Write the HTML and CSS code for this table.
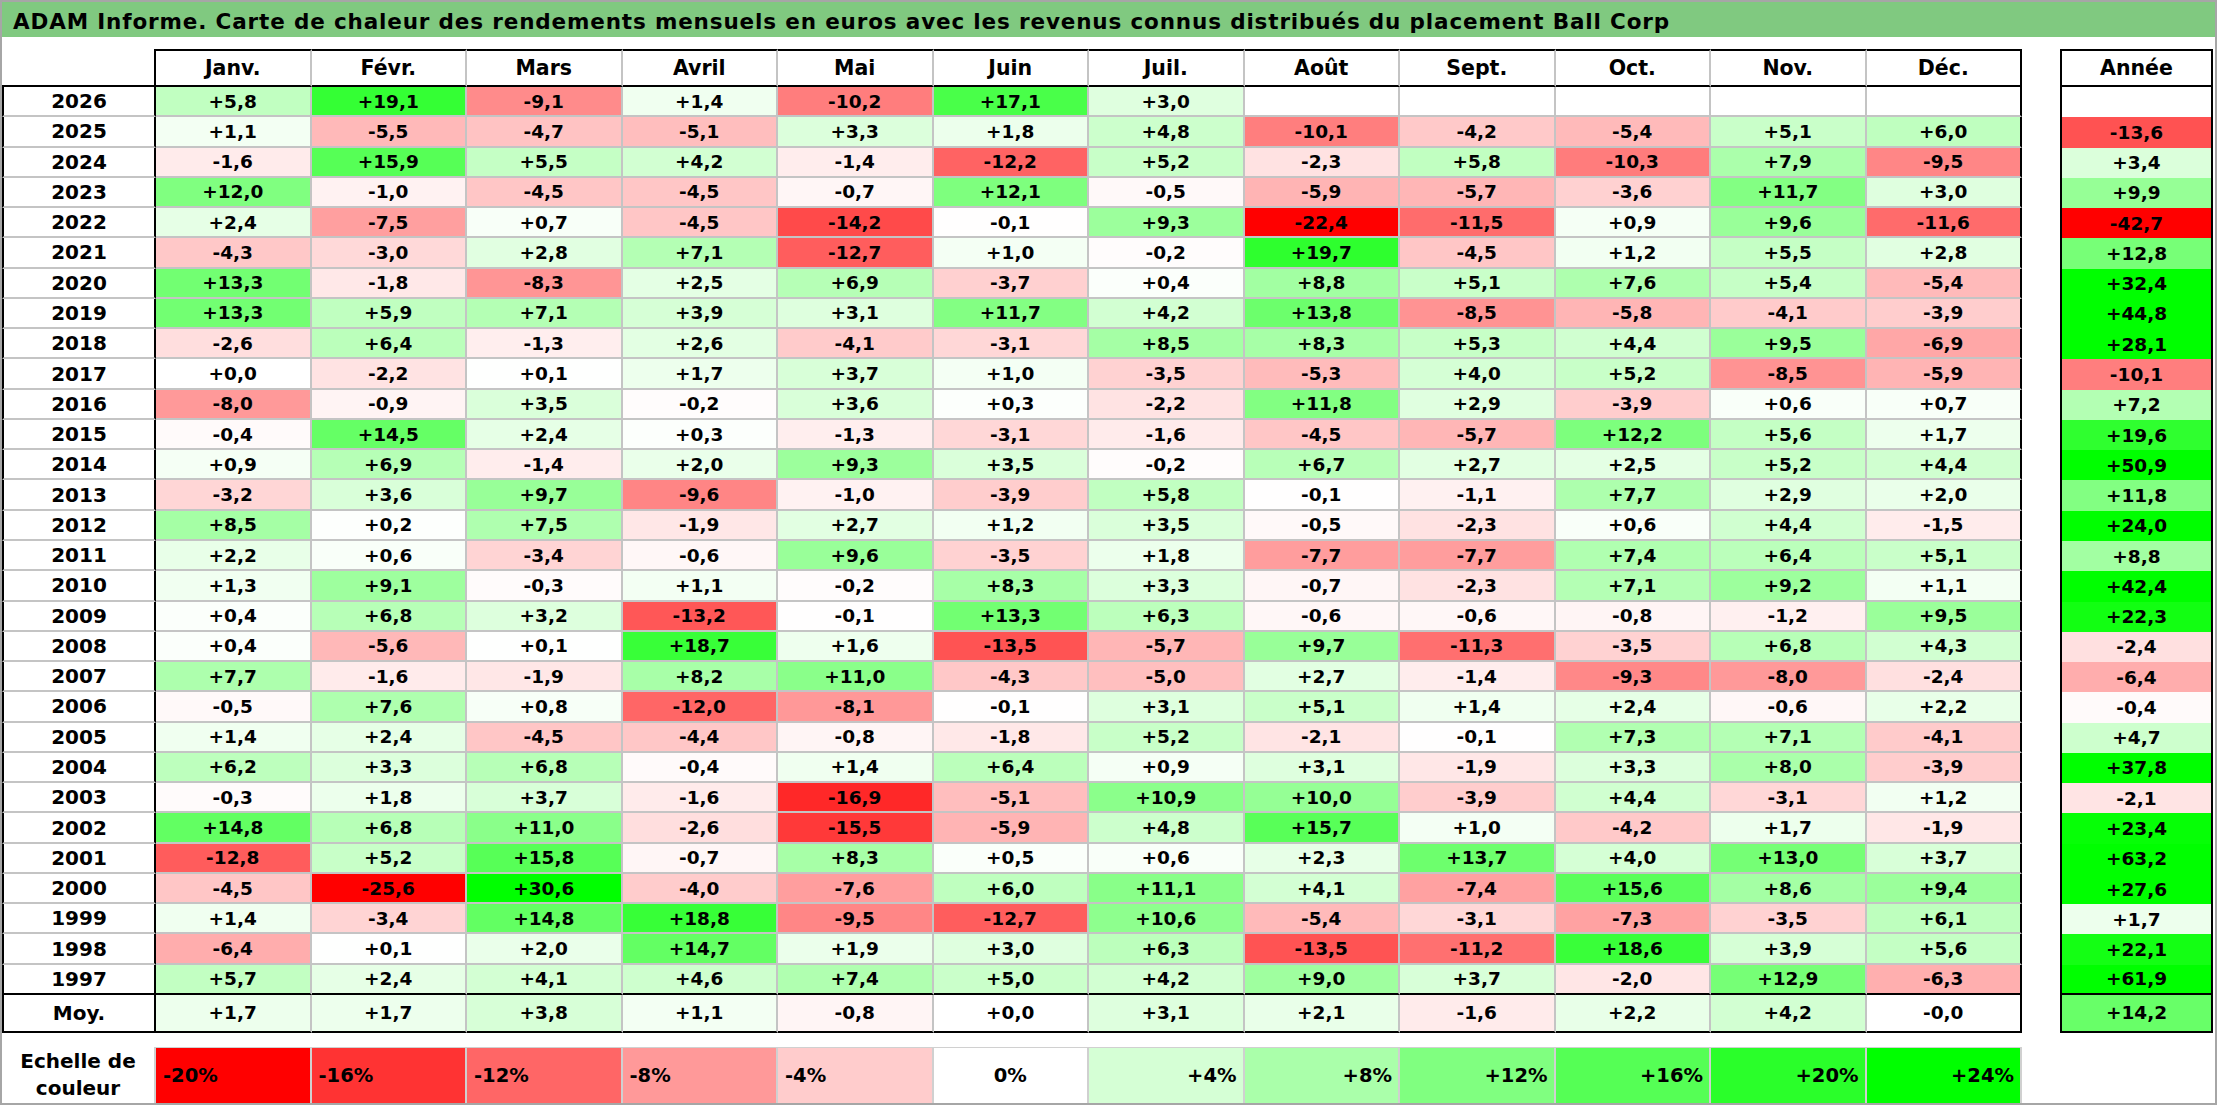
FILE: index.html
```html
<!DOCTYPE html>
<html lang="fr">
<head>
<meta charset="utf-8">
<title>ADAM Informe - Ball Corp</title>
<link rel="stylesheet" href="styles.css">
</head>
<body>
<div class="page">
  <div class="title">ADAM Informe. Carte de chaleur des rendements mensuels en euros avec les revenus connus distribués du placement Ball Corp</div>
  <div class="heat">
    <div class="row head"><div class="corner"></div><div class="m">Janv.</div><div class="m">Févr.</div><div class="m">Mars</div><div class="m">Avril</div><div class="m">Mai</div><div class="m">Juin</div><div class="m">Juil.</div><div class="m">Août</div><div class="m">Sept.</div><div class="m">Oct.</div><div class="m">Nov.</div><div class="m">Déc.</div><div class="sp"></div><div class="an">Année</div></div>
    <div class="row"><div class="yr">2026</div><div class="v">+5,8</div><div class="v">+19,1</div><div class="v">-9,1</div><div class="v">+1,4</div><div class="v">-10,2</div><div class="v">+17,1</div><div class="v">+3,0</div><div class="v"></div><div class="v"></div><div class="v"></div><div class="v"></div><div class="v"></div><div class="sp"></div><div class="an"></div></div>
    <div class="row"><div class="yr">2025</div><div class="v">+1,1</div><div class="v">-5,5</div><div class="v">-4,7</div><div class="v">-5,1</div><div class="v">+3,3</div><div class="v">+1,8</div><div class="v">+4,8</div><div class="v">-10,1</div><div class="v">-4,2</div><div class="v">-5,4</div><div class="v">+5,1</div><div class="v">+6,0</div><div class="sp"></div><div class="an">-13,6</div></div>
    <div class="row"><div class="yr">2024</div><div class="v">-1,6</div><div class="v">+15,9</div><div class="v">+5,5</div><div class="v">+4,2</div><div class="v">-1,4</div><div class="v">-12,2</div><div class="v">+5,2</div><div class="v">-2,3</div><div class="v">+5,8</div><div class="v">-10,3</div><div class="v">+7,9</div><div class="v">-9,5</div><div class="sp"></div><div class="an">+3,4</div></div>
    <div class="row"><div class="yr">2023</div><div class="v">+12,0</div><div class="v">-1,0</div><div class="v">-4,5</div><div class="v">-4,5</div><div class="v">-0,7</div><div class="v">+12,1</div><div class="v">-0,5</div><div class="v">-5,9</div><div class="v">-5,7</div><div class="v">-3,6</div><div class="v">+11,7</div><div class="v">+3,0</div><div class="sp"></div><div class="an">+9,9</div></div>
    <div class="row"><div class="yr">2022</div><div class="v">+2,4</div><div class="v">-7,5</div><div class="v">+0,7</div><div class="v">-4,5</div><div class="v">-14,2</div><div class="v">-0,1</div><div class="v">+9,3</div><div class="v">-22,4</div><div class="v">-11,5</div><div class="v">+0,9</div><div class="v">+9,6</div><div class="v">-11,6</div><div class="sp"></div><div class="an">-42,7</div></div>
    <div class="row"><div class="yr">2021</div><div class="v">-4,3</div><div class="v">-3,0</div><div class="v">+2,8</div><div class="v">+7,1</div><div class="v">-12,7</div><div class="v">+1,0</div><div class="v">-0,2</div><div class="v">+19,7</div><div class="v">-4,5</div><div class="v">+1,2</div><div class="v">+5,5</div><div class="v">+2,8</div><div class="sp"></div><div class="an">+12,8</div></div>
    <div class="row"><div class="yr">2020</div><div class="v">+13,3</div><div class="v">-1,8</div><div class="v">-8,3</div><div class="v">+2,5</div><div class="v">+6,9</div><div class="v">-3,7</div><div class="v">+0,4</div><div class="v">+8,8</div><div class="v">+5,1</div><div class="v">+7,6</div><div class="v">+5,4</div><div class="v">-5,4</div><div class="sp"></div><div class="an">+32,4</div></div>
    <div class="row"><div class="yr">2019</div><div class="v">+13,3</div><div class="v">+5,9</div><div class="v">+7,1</div><div class="v">+3,9</div><div class="v">+3,1</div><div class="v">+11,7</div><div class="v">+4,2</div><div class="v">+13,8</div><div class="v">-8,5</div><div class="v">-5,8</div><div class="v">-4,1</div><div class="v">-3,9</div><div class="sp"></div><div class="an">+44,8</div></div>
    <div class="row"><div class="yr">2018</div><div class="v">-2,6</div><div class="v">+6,4</div><div class="v">-1,3</div><div class="v">+2,6</div><div class="v">-4,1</div><div class="v">-3,1</div><div class="v">+8,5</div><div class="v">+8,3</div><div class="v">+5,3</div><div class="v">+4,4</div><div class="v">+9,5</div><div class="v">-6,9</div><div class="sp"></div><div class="an">+28,1</div></div>
    <div class="row"><div class="yr">2017</div><div class="v">+0,0</div><div class="v">-2,2</div><div class="v">+0,1</div><div class="v">+1,7</div><div class="v">+3,7</div><div class="v">+1,0</div><div class="v">-3,5</div><div class="v">-5,3</div><div class="v">+4,0</div><div class="v">+5,2</div><div class="v">-8,5</div><div class="v">-5,9</div><div class="sp"></div><div class="an">-10,1</div></div>
    <div class="row"><div class="yr">2016</div><div class="v">-8,0</div><div class="v">-0,9</div><div class="v">+3,5</div><div class="v">-0,2</div><div class="v">+3,6</div><div class="v">+0,3</div><div class="v">-2,2</div><div class="v">+11,8</div><div class="v">+2,9</div><div class="v">-3,9</div><div class="v">+0,6</div><div class="v">+0,7</div><div class="sp"></div><div class="an">+7,2</div></div>
    <div class="row"><div class="yr">2015</div><div class="v">-0,4</div><div class="v">+14,5</div><div class="v">+2,4</div><div class="v">+0,3</div><div class="v">-1,3</div><div class="v">-3,1</div><div class="v">-1,6</div><div class="v">-4,5</div><div class="v">-5,7</div><div class="v">+12,2</div><div class="v">+5,6</div><div class="v">+1,7</div><div class="sp"></div><div class="an">+19,6</div></div>
    <div class="row"><div class="yr">2014</div><div class="v">+0,9</div><div class="v">+6,9</div><div class="v">-1,4</div><div class="v">+2,0</div><div class="v">+9,3</div><div class="v">+3,5</div><div class="v">-0,2</div><div class="v">+6,7</div><div class="v">+2,7</div><div class="v">+2,5</div><div class="v">+5,2</div><div class="v">+4,4</div><div class="sp"></div><div class="an">+50,9</div></div>
    <div class="row"><div class="yr">2013</div><div class="v">-3,2</div><div class="v">+3,6</div><div class="v">+9,7</div><div class="v">-9,6</div><div class="v">-1,0</div><div class="v">-3,9</div><div class="v">+5,8</div><div class="v">-0,1</div><div class="v">-1,1</div><div class="v">+7,7</div><div class="v">+2,9</div><div class="v">+2,0</div><div class="sp"></div><div class="an">+11,8</div></div>
    <div class="row"><div class="yr">2012</div><div class="v">+8,5</div><div class="v">+0,2</div><div class="v">+7,5</div><div class="v">-1,9</div><div class="v">+2,7</div><div class="v">+1,2</div><div class="v">+3,5</div><div class="v">-0,5</div><div class="v">-2,3</div><div class="v">+0,6</div><div class="v">+4,4</div><div class="v">-1,5</div><div class="sp"></div><div class="an">+24,0</div></div>
    <div class="row"><div class="yr">2011</div><div class="v">+2,2</div><div class="v">+0,6</div><div class="v">-3,4</div><div class="v">-0,6</div><div class="v">+9,6</div><div class="v">-3,5</div><div class="v">+1,8</div><div class="v">-7,7</div><div class="v">-7,7</div><div class="v">+7,4</div><div class="v">+6,4</div><div class="v">+5,1</div><div class="sp"></div><div class="an">+8,8</div></div>
    <div class="row"><div class="yr">2010</div><div class="v">+1,3</div><div class="v">+9,1</div><div class="v">-0,3</div><div class="v">+1,1</div><div class="v">-0,2</div><div class="v">+8,3</div><div class="v">+3,3</div><div class="v">-0,7</div><div class="v">-2,3</div><div class="v">+7,1</div><div class="v">+9,2</div><div class="v">+1,1</div><div class="sp"></div><div class="an">+42,4</div></div>
    <div class="row"><div class="yr">2009</div><div class="v">+0,4</div><div class="v">+6,8</div><div class="v">+3,2</div><div class="v">-13,2</div><div class="v">-0,1</div><div class="v">+13,3</div><div class="v">+6,3</div><div class="v">-0,6</div><div class="v">-0,6</div><div class="v">-0,8</div><div class="v">-1,2</div><div class="v">+9,5</div><div class="sp"></div><div class="an">+22,3</div></div>
    <div class="row"><div class="yr">2008</div><div class="v">+0,4</div><div class="v">-5,6</div><div class="v">+0,1</div><div class="v">+18,7</div><div class="v">+1,6</div><div class="v">-13,5</div><div class="v">-5,7</div><div class="v">+9,7</div><div class="v">-11,3</div><div class="v">-3,5</div><div class="v">+6,8</div><div class="v">+4,3</div><div class="sp"></div><div class="an">-2,4</div></div>
    <div class="row"><div class="yr">2007</div><div class="v">+7,7</div><div class="v">-1,6</div><div class="v">-1,9</div><div class="v">+8,2</div><div class="v">+11,0</div><div class="v">-4,3</div><div class="v">-5,0</div><div class="v">+2,7</div><div class="v">-1,4</div><div class="v">-9,3</div><div class="v">-8,0</div><div class="v">-2,4</div><div class="sp"></div><div class="an">-6,4</div></div>
    <div class="row"><div class="yr">2006</div><div class="v">-0,5</div><div class="v">+7,6</div><div class="v">+0,8</div><div class="v">-12,0</div><div class="v">-8,1</div><div class="v">-0,1</div><div class="v">+3,1</div><div class="v">+5,1</div><div class="v">+1,4</div><div class="v">+2,4</div><div class="v">-0,6</div><div class="v">+2,2</div><div class="sp"></div><div class="an">-0,4</div></div>
    <div class="row"><div class="yr">2005</div><div class="v">+1,4</div><div class="v">+2,4</div><div class="v">-4,5</div><div class="v">-4,4</div><div class="v">-0,8</div><div class="v">-1,8</div><div class="v">+5,2</div><div class="v">-2,1</div><div class="v">-0,1</div><div class="v">+7,3</div><div class="v">+7,1</div><div class="v">-4,1</div><div class="sp"></div><div class="an">+4,7</div></div>
    <div class="row"><div class="yr">2004</div><div class="v">+6,2</div><div class="v">+3,3</div><div class="v">+6,8</div><div class="v">-0,4</div><div class="v">+1,4</div><div class="v">+6,4</div><div class="v">+0,9</div><div class="v">+3,1</div><div class="v">-1,9</div><div class="v">+3,3</div><div class="v">+8,0</div><div class="v">-3,9</div><div class="sp"></div><div class="an">+37,8</div></div>
    <div class="row"><div class="yr">2003</div><div class="v">-0,3</div><div class="v">+1,8</div><div class="v">+3,7</div><div class="v">-1,6</div><div class="v">-16,9</div><div class="v">-5,1</div><div class="v">+10,9</div><div class="v">+10,0</div><div class="v">-3,9</div><div class="v">+4,4</div><div class="v">-3,1</div><div class="v">+1,2</div><div class="sp"></div><div class="an">-2,1</div></div>
    <div class="row"><div class="yr">2002</div><div class="v">+14,8</div><div class="v">+6,8</div><div class="v">+11,0</div><div class="v">-2,6</div><div class="v">-15,5</div><div class="v">-5,9</div><div class="v">+4,8</div><div class="v">+15,7</div><div class="v">+1,0</div><div class="v">-4,2</div><div class="v">+1,7</div><div class="v">-1,9</div><div class="sp"></div><div class="an">+23,4</div></div>
    <div class="row"><div class="yr">2001</div><div class="v">-12,8</div><div class="v">+5,2</div><div class="v">+15,8</div><div class="v">-0,7</div><div class="v">+8,3</div><div class="v">+0,5</div><div class="v">+0,6</div><div class="v">+2,3</div><div class="v">+13,7</div><div class="v">+4,0</div><div class="v">+13,0</div><div class="v">+3,7</div><div class="sp"></div><div class="an">+63,2</div></div>
    <div class="row"><div class="yr">2000</div><div class="v">-4,5</div><div class="v">-25,6</div><div class="v">+30,6</div><div class="v">-4,0</div><div class="v">-7,6</div><div class="v">+6,0</div><div class="v">+11,1</div><div class="v">+4,1</div><div class="v">-7,4</div><div class="v">+15,6</div><div class="v">+8,6</div><div class="v">+9,4</div><div class="sp"></div><div class="an">+27,6</div></div>
    <div class="row"><div class="yr">1999</div><div class="v">+1,4</div><div class="v">-3,4</div><div class="v">+14,8</div><div class="v">+18,8</div><div class="v">-9,5</div><div class="v">-12,7</div><div class="v">+10,6</div><div class="v">-5,4</div><div class="v">-3,1</div><div class="v">-7,3</div><div class="v">-3,5</div><div class="v">+6,1</div><div class="sp"></div><div class="an">+1,7</div></div>
    <div class="row"><div class="yr">1998</div><div class="v">-6,4</div><div class="v">+0,1</div><div class="v">+2,0</div><div class="v">+14,7</div><div class="v">+1,9</div><div class="v">+3,0</div><div class="v">+6,3</div><div class="v">-13,5</div><div class="v">-11,2</div><div class="v">+18,6</div><div class="v">+3,9</div><div class="v">+5,6</div><div class="sp"></div><div class="an">+22,1</div></div>
    <div class="row last"><div class="yr">1997</div><div class="v">+5,7</div><div class="v">+2,4</div><div class="v">+4,1</div><div class="v">+4,6</div><div class="v">+7,4</div><div class="v">+5,0</div><div class="v">+4,2</div><div class="v">+9,0</div><div class="v">+3,7</div><div class="v">-2,0</div><div class="v">+12,9</div><div class="v">-6,3</div><div class="sp"></div><div class="an">+61,9</div></div>
    <div class="row avg"><div class="yr">Moy.</div><div class="v">+1,7</div><div class="v">+1,7</div><div class="v">+3,8</div><div class="v">+1,1</div><div class="v">-0,8</div><div class="v">+0,0</div><div class="v">+3,1</div><div class="v">+2,1</div><div class="v">-1,6</div><div class="v">+2,2</div><div class="v">+4,2</div><div class="v">-0,0</div><div class="sp"></div><div class="an">+14,2</div></div>
  </div>
  <div class="legend">
    <div class="lab">Echelle de<br>couleur</div>
    <div class="lg neg" data-v="-20">-20%</div>
    <div class="lg neg" data-v="-16">-16%</div>
    <div class="lg neg" data-v="-12">-12%</div>
    <div class="lg neg" data-v="-8">-8%</div>
    <div class="lg neg" data-v="-4">-4%</div>
    <div class="lg zero" data-v="0">0%</div>
    <div class="lg pos" data-v="4">+4%</div>
    <div class="lg pos" data-v="8">+8%</div>
    <div class="lg pos" data-v="12">+12%</div>
    <div class="lg pos" data-v="16">+16%</div>
    <div class="lg pos" data-v="20">+20%</div>
    <div class="lg pos" data-v="24">+24%</div>
  </div>
</div>
<script src="heat.js"></script>
</body>
</html>
```

FILE: styles.css
```css
* { box-sizing: border-box; }
html, body { margin: 0; padding: 0; background: #fff; }
body {
  font-family: "DejaVu Sans", "Liberation Sans", sans-serif;
  font-weight: bold;
  color: #000;
}
.page {
  width: 2217px;
  height: 1105px;
  border: 2px solid #a6a6a6;
  overflow: hidden;
  background: #fff;
}
.title {
  height: 35px;
  background: #80c980;
  padding: 8px 0 0 11px;
  font-size: 21.5px;
  letter-spacing: 0.85px;
  line-height: 24px;
  white-space: nowrap;
}

/* main grid: header, 30 year rows, average row */
.heat {
  display: grid;
  grid-template-columns: 154px repeat(12, 155.5px) 38px 153px;
  grid-template-rows: 38px repeat(30, 30.27px) 38px;
  margin-top: 12px;
}
.row { display: contents; }
.row > div {
  display: flex;
  align-items: center;
  justify-content: center;
  white-space: nowrap;
  min-width: 0;
}

.head > div { font-size: 20.5px; }
.head .corner { border-right: 2px solid #000; border-bottom: 2px solid #000; }
.head .m {
  border-top: 2px solid #000;
  border-bottom: 2px solid #000;
  border-right: 2px solid #c4c4c4;
}
.head .m:nth-child(13) { border-right-color: #000; }

.row .yr {
  font-size: 20px;
  border-left: 2px solid #000;
  border-right: 2px solid #000;
  border-bottom: 2px solid #c4c4c4;
}
.row .v {
  font-size: 18.5px;
  border-right: 2px solid #c4c4c4;
  border-bottom: 2px solid #c4c4c4;
  background: #fff;
}
.row .v:nth-child(13) { border-right-color: #000; }
.row .an {
  font-size: 18.5px;
  border-left: 2px solid #000;
  border-right: 2px solid #000;
  background: #fff;
}
.head .an { font-size: 20.5px; border: 2px solid #000; }
.last .yr, .last .v, .avg .yr, .avg .v { border-bottom-color: #000; }
.last .an, .avg .an { border-bottom: 2px solid #000; }

/* colour scale */
.legend {
  display: grid;
  grid-template-columns: 154px repeat(12, 155.5px);
  height: 56px;
  margin-top: 14px;
}
.legend > div {
  display: flex;
  align-items: center;
  white-space: nowrap;
}
.legend .lab {
  justify-content: center;
  text-align: center;
  font-size: 20px;
  line-height: 27px;
  border-right: 2px solid #d0d0d0;
}
.legend .lg {
  font-size: 19.5px;
  border-top: 1px solid #d0d0d0;
  border-right: 2px solid #d0d0d0;
}
.legend .neg { justify-content: flex-start; padding-left: 7px; }
.legend .zero { justify-content: center; }
.legend .pos { justify-content: flex-end; padding-right: 6px; }
```

FILE: heat.js
```js
(function () {
  function colour(v) {
    var t, c;
    if (v < 0) {
      t = Math.min(-v / 20, 1);
      c = Math.round(255 * (1 - t));
      return 'rgb(255,' + c + ',' + c + ')';
    }
    t = Math.min(v / 24, 1);
    c = Math.round(255 * (1 - t));
    return 'rgb(' + c + ',255,' + c + ')';
  }
  var cells = document.querySelectorAll('.heat .v, .heat .row .an, .legend .lg');
  for (var i = 0; i < cells.length; i++) {
    var el = cells[i];
    if (el.parentNode.classList.contains('head')) continue;
    var s = el.getAttribute('data-v');
    if (s === null) s = el.textContent.trim();
    if (!s) continue;
    var v = parseFloat(s.replace(',', '.'));
    if (isNaN(v)) continue;
    el.style.backgroundColor = colour(v);
  }
})();
```
